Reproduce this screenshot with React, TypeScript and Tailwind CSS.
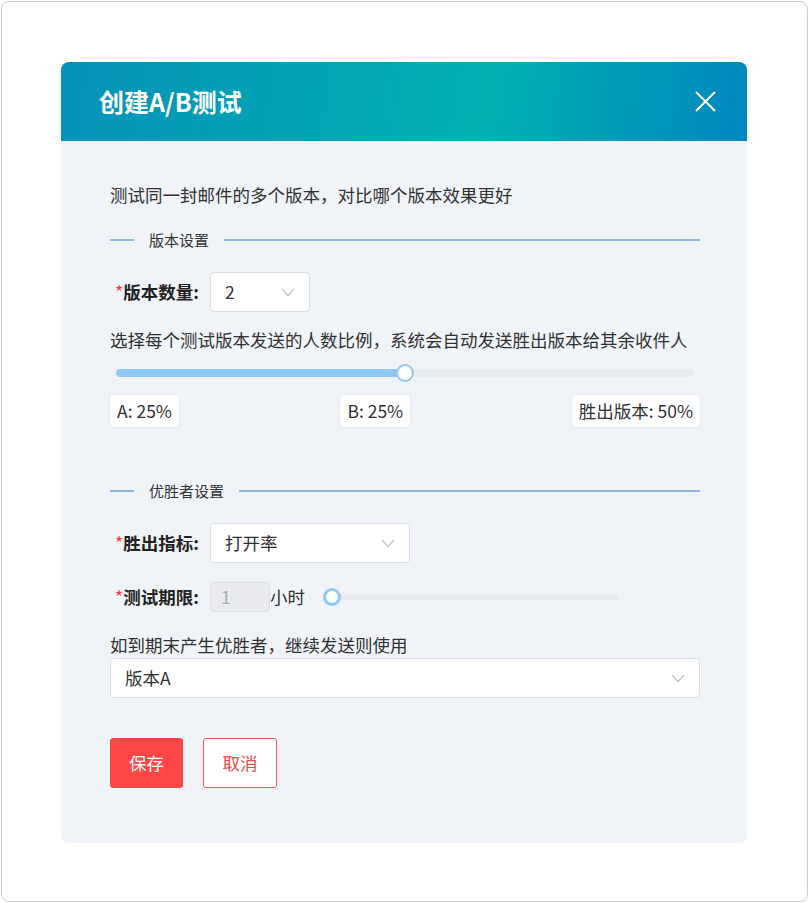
import { useState } from 'react';

const font = {
  fontFamily:
    '"Noto Sans CJK SC", "Noto Sans", sans-serif',
};

function Chevron() {
  return (
    <svg
      width="14"
      height="9"
      viewBox="0 0 14 9"
      fill="none"
      className="shrink-0"
    >
      <path
        d="M1 1l6 6.5L13 1"
        stroke="#c0c4cc"
        strokeWidth="1.2"
      />
    </svg>
  );
}

function Divider({ title }: { title: string }) {
  return (
    <div className="flex h-5 items-center">
      <div className="h-[2px] w-6 bg-[#8ab6f2]" />
      <span className="mx-[15px] text-[15px] leading-5 text-[#333]">
        {title}
      </span>
      <div className="h-[2px] flex-1 bg-[#8ab6f2]" />
    </div>
  );
}

function Select({
  value,
  width,
}: {
  value: string;
  width: string;
}) {
  return (
    <div
      className={`flex h-10 items-center justify-between rounded-[4px] border border-[#dcdfe6] bg-white pl-[14px] pr-[14px] ${width}`}
    >
      <span className="text-[17.5px] text-[#303133]">
        {value}
      </span>
      <Chevron />
    </div>
  );
}

function FieldLabel({ text }: { text: string }) {
  return (
    <div className="w-[100px] shrink-0 pl-[5px] text-[17.5px] font-bold text-[#222]">
      <span className="font-normal text-[#f33]">*</span>
      {text}:
    </div>
  );
}

function Tag({ text }: { text: string }) {
  return (
    <div className="flex h-8 items-center rounded-[4px] bg-white px-[7px] text-[17.5px] text-[#303133] shadow-[0_0_2px_rgba(0,0,0,0.12)]">
      {text}
    </div>
  );
}

export default function App() {
  const [split] = useState(50);
  const [hours] = useState(1);

  return (
    <div
      className="h-[903px] w-[809px] bg-white p-px"
      style={font}
    >
      <div className="h-[901px] rounded-[8px] border border-[#c9ccd3] pl-[59px] pt-[60px]">
        <div className="w-[686px] overflow-hidden rounded-[8px]">
          <div className="flex h-[79px] items-center justify-between bg-[linear-gradient(100deg,#0792b9_0%,#00b1b1_62%,#0087c0_100%)] pl-[38px] pr-[30px]">
            <h1 className="text-[25px] font-bold text-white">
              创建A/B测试
            </h1>
            <button
              type="button"
              aria-label="关闭"
              className="flex h-6 w-6 items-center justify-center"
            >
              <svg
                width="21"
                height="21"
                viewBox="0 0 21 21"
              >
                <path
                  d="M1 1l19 19M20 1L1 20"
                  stroke="white"
                  strokeWidth="2"
                />
              </svg>
            </button>
          </div>

          <div className="bg-[#f0f4f8] pb-[55px] pl-[49px] pr-[47px] pt-[41px]">
            <p className="text-[17.5px] leading-[26px] text-[#303133]">
              测试同一封邮件的多个版本，对比哪个版本效果更好
            </p>

            <div className="mt-[22px]">
              <Divider title="版本设置" />
            </div>

            <div className="mt-[22px] flex items-center">
              <FieldLabel text="版本数量" />
              <Select value="2" width="w-[100px]" />
            </div>

            <p className="mt-[15px] text-[17.5px] leading-[26px] text-[#303133]">
              选择每个测试版本发送的人数比例，系统会自动发送胜出版本给其余收件人
            </p>

            <div className="relative mt-[10px] h-5 px-[6px]">
              <div className="relative top-[6px] h-2 rounded-full bg-[#e9ebee]">
                <div
                  className="h-2 rounded-full bg-[#91c8fb]"
                  style={{ width: `${split}%` }}
                />
                <div
                  className="absolute top-1/2 h-[18px] w-[18px] -translate-x-1/2 -translate-y-1/2 rounded-full border-2 border-[#91c8fb] bg-white"
                  style={{ left: `${split}%` }}
                />
              </div>
            </div>

            <div className="mt-[12px] flex justify-between">
              <Tag text="A: 25%" />
              <Tag text="B: 25%" />
              <Tag text="胜出版本: 50%" />
            </div>

            <div className="mt-[54px]">
              <Divider title="优胜者设置" />
            </div>

            <div className="mt-[22px] flex items-center">
              <FieldLabel text="胜出指标" />
              <Select value="打开率" width="w-[200px]" />
            </div>

            <div className="mt-[19px] flex h-[30px] items-center">
              <FieldLabel text="测试期限" />
              <div className="flex h-[30px] w-[60px] items-center rounded-[4px] border border-[#dcdfe6] bg-[#e9ebee] pl-[10px] text-[17.5px] text-[#a8abb2]">
                {hours}
              </div>
              <span className="text-[17.5px] text-[#303133]">
                小时
              </span>
              <div className="relative ml-[18px] h-5 w-[296px]">
                <div className="absolute left-[9px] right-0 top-[7px] h-[6px] rounded-full bg-[#e9ebee]" />
                <div className="absolute left-0 top-[1px] h-[18px] w-[18px] rounded-full border-[3px] border-[#91c8fb] bg-white" />
              </div>
            </div>

            <p className="mt-[20px] text-[17.5px] leading-[26px] text-[#303133]">
              如到期末产生优胜者，继续发送则使用
            </p>

            <Select value="版本A" width="w-full" />

            <div className="mt-[40px] flex gap-[20px]">
              <button
                type="button"
                className="h-[50px] w-[73px] rounded-[3px] bg-[#ff4646] text-[17.5px] text-white"
              >
                保存
              </button>
              <button
                type="button"
                className="h-[50px] w-[74px] rounded-[3px] border border-[#f25353] bg-white text-[17.5px] text-[#f04848]"
              >
                取消
              </button>
            </div>
          </div>
        </div>
      </div>
    </div>
  );
}
